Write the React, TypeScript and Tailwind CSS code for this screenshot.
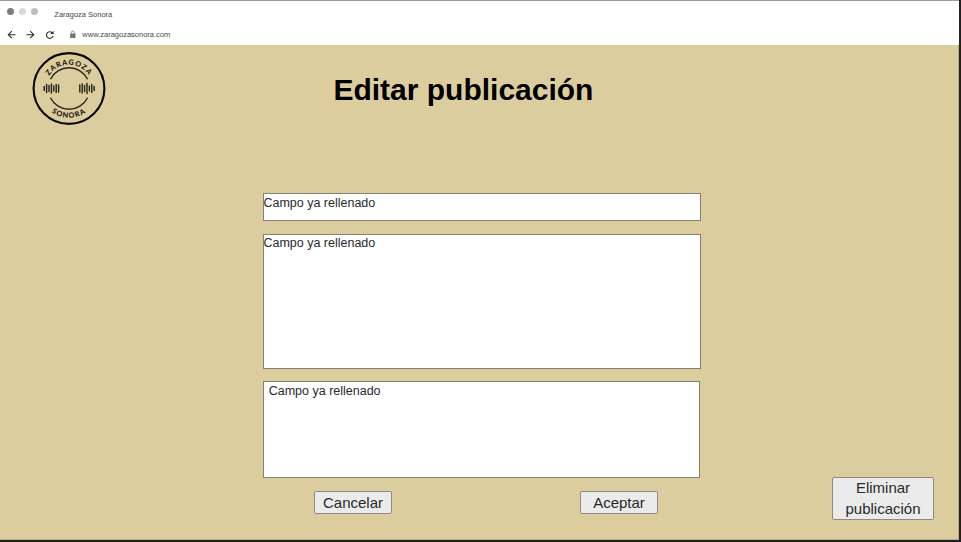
import React from "react";

function Toolbar() {
  return (
    <header className="flex h-[45px] shrink-0 flex-col border-t border-[#a09a92] bg-white text-[7.5px] leading-[10px] text-[#46464a]">
      <div className="flex h-[23px] items-start pl-[7px] pt-[7px]">
        <div className="flex gap-[5px]">
          <span className="h-[7px] w-[7px] rounded-full bg-[#7d7d7d]" />
          <span className="h-[7px] w-[7px] rounded-full bg-[#dadada]" />
          <span className="h-[7px] w-[7px] rounded-full bg-[#bfbfbf]" />
        </div>
        <span className="ml-[16.3px] mt-[2px]">Zaragoza Sonora</span>
      </div>
      <div className="flex h-[21px] items-center pl-[7px]">
        <svg width="52" height="12" viewBox="0 0 52 12" fill="none" stroke="#2c2c2c" strokeWidth="1.1">
          <path d="M8.5 5.7H1.4M4.8 2.2L1.3 5.7L4.8 9.2" />
          <path d="M19.5 5.7H26.6M23.2 2.2L26.7 5.7L23.2 9.2" />
          <path d="M45.2 3.8A3.3 3.3 0 1 0 46 6.8" />
          <path d="M46.6 1.7V5H43.3Z" fill="#2c2c2c" stroke="none" />
        </svg>
        <svg className="ml-[10px]" width="8" height="10" viewBox="0 0 8 10">
          <rect x="1.1" y="3.5" width="5.4" height="4.6" rx="0.6" fill="#767676" />
          <path d="M2.3 3.8V2.6a1.5 1.5 0 0 1 3 0V3.8" fill="none" stroke="#767676" strokeWidth="0.8" />
        </svg>
        <span className="ml-[5.3px]">www.zaragozasonora.com</span>
      </div>
    </header>
  );
}

// Bar heights of the sound wave on either side of the badge.
const leftWave = [4, 8, 6, 9, 5, 8, 7];
const rightWave = [7, 9, 6, 10, 5, 8, 4];

function Wave({ bars, x }: { bars: number[]; x: number }) {
  return (
    <g stroke="#2b251b" strokeWidth="1.45" strokeLinecap="round">
      {bars.map((h, i) => (
        <line key={i} x1={x + i * 2.4} x2={x + i * 2.4} y1={37.5 - h / 2} y2={37.5 + h / 2} />
      ))}
    </g>
  );
}

function Logo() {
  return (
    <svg width="74" height="75" viewBox="0 0 74 75" className="shrink-0">
      <defs>
        <path id="arc-top" d="M13.3 37.5A23.7 23.7 0 0 1 60.7 37.5" />
        <path id="arc-bottom" d="M7.6 37.5A29.4 29.4 0 0 0 66.4 37.5" />
      </defs>
      <circle cx="37" cy="37.5" r="35.4" fill="none" stroke="#0b0906" strokeWidth="2.1" />
      <path d="M18.4 28.3A20.8 20.8 0 0 1 55.6 28.3M18.4 46.7A20.8 20.8 0 0 0 55.6 46.7" fill="none" stroke="#2b251b" strokeWidth="1.4" />
      <Wave bars={leftWave} x={12.2} />
      <Wave bars={rightWave} x={47.8} />
      <g className="font-[Lato,sans-serif] font-black" fill="#1c1710" fontSize="7.3" textAnchor="middle">
        <text letterSpacing="0.9">
          <textPath href="#arc-top" startOffset="50%">ZARAGOZA</textPath>
        </text>
        <text letterSpacing="1">
          <textPath href="#arc-bottom" startOffset="50%">SONORA</textPath>
        </text>
      </g>
    </svg>
  );
}

const fieldBase = "border border-[#858071] bg-white text-[12.5px] leading-[16px] text-[#29292b]";
const buttonBase =
  "rounded-[2px] border border-[#8f8a80] bg-[#ebebeb] text-center text-[15px] text-[#29292b]";

export default function App() {
  return (
    <div className="h-[542px] w-[961px] overflow-hidden bg-[#231f20] font-['Liberation_Sans',Arial,sans-serif]">
      <div className="flex h-[540px] w-[959px] flex-col bg-[#dccd9e]">
        <Toolbar />
        <main className="flex grow flex-col border-b border-r border-[#b8ab85]">
          <div className="flex h-[148px] items-start pl-[32px] pt-[6px]">
            <Logo />
            <h1 className="ml-[227.4px] mt-[21px] whitespace-nowrap text-[30px] font-bold leading-[36px] text-black">
              Editar publicación
            </h1>
          </div>
          <div className="flex">
            <form className="ml-[263px] w-[438px]">
              <div className={`${fieldBase} h-[28px] pt-px -indent-[0.6px]`}>Campo ya rellenado</div>
              <div className={`${fieldBase} mt-[13px] h-[135px] -indent-[0.6px]`}>Campo ya rellenado</div>
              <div className={`${fieldBase} mt-[12px] h-[97px] w-[437px] pl-[4.7px] pt-px`}>Campo ya rellenado</div>
              <div className="mt-[13px] flex gap-[188px] pl-[51px]">
                <button type="button" className={`${buttonBase} h-[23px] w-[78px] leading-[21px]`}>Cancelar</button>
                <button type="button" className={`${buttonBase} h-[23px] w-[78px] leading-[21px]`}>Aceptar</button>
              </div>
            </form>
            <button type="button" className={`${buttonBase} ml-[131px] mt-[284px] h-[43px] w-[102px] leading-[21px]`}>
              <span className="-mt-[2px] block">
                Eliminar
                <br />
                publicación
              </span>
            </button>
          </div>
        </main>
      </div>
    </div>
  );
}
